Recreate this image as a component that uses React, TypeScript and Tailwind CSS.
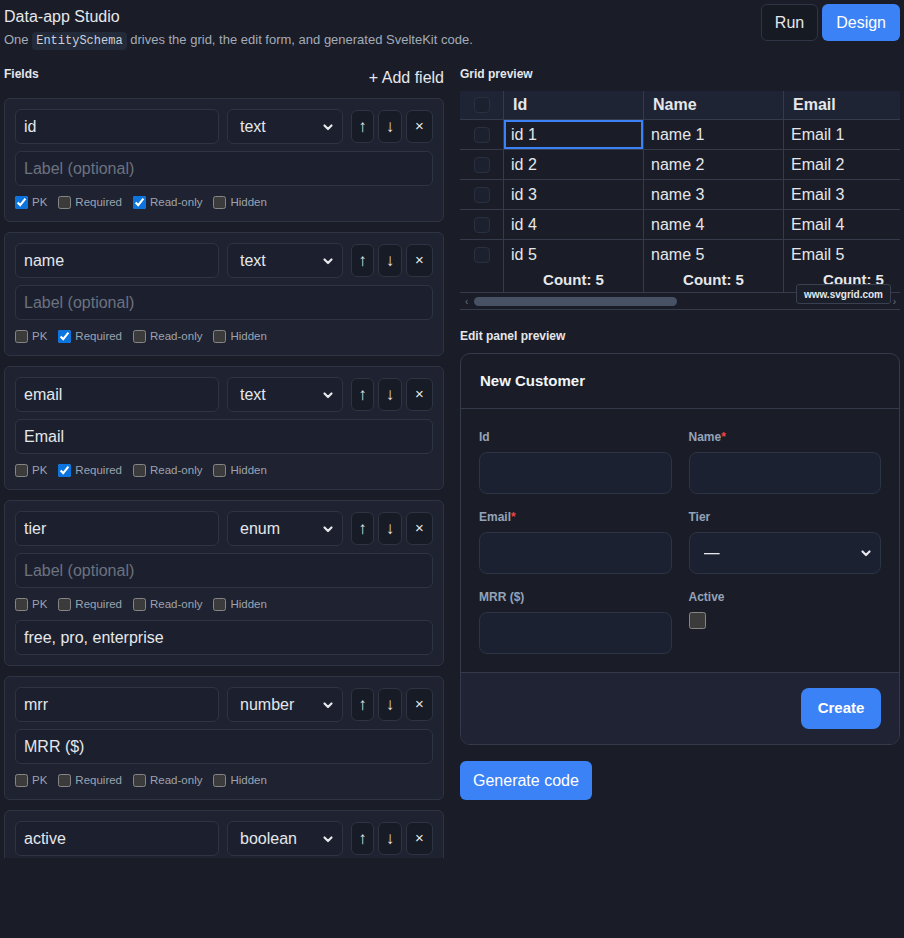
import React from 'react'

type Field = {
    name: string
    type: string
    label: string
    pk: boolean
    required: boolean
    readOnly: boolean
    hidden: boolean
    options?: string
}

const fields: Field[] = [
    { name: 'id', type: 'text', label: '', pk: true, required: false, readOnly: true, hidden: false },
    { name: 'name', type: 'text', label: '', pk: false, required: true, readOnly: false, hidden: false },
    { name: 'email', type: 'text', label: 'Email', pk: false, required: true, readOnly: false, hidden: false },
    { name: 'tier', type: 'enum', label: '', pk: false, required: false, readOnly: false, hidden: false, options: 'free, pro, enterprise' },
    { name: 'mrr', type: 'number', label: 'MRR ($)', pk: false, required: false, readOnly: false, hidden: false },
    { name: 'active', type: 'boolean', label: '', pk: false, required: false, readOnly: false, hidden: false },
]

const rows = [1, 2, 3, 4, 5]

function Chevron() {
    return (
        <svg width="12" height="12" viewBox="0 0 12 12" className='pointer-events-none absolute right-[9px] top-1/2 -translate-y-1/2'>
            <path d="M2.5 4.5 L6 8 L9.5 4.5" fill="none" stroke="#e5e7eb" strokeWidth="2.2" strokeLinecap="round" strokeLinejoin="round" />
        </svg>
    )
}

function Check({ label, checked }: { label: string; checked: boolean }) {
    return (
        <label className='flex items-center gap-1 text-[11.5px] leading-[18px] text-[#9ca3af]'>
            <input type="checkbox" defaultChecked={checked} className='m-0 w-[13px] h-[13px] accent-[#0b74de]' />
            {label}
        </label>
    )
}

function FieldCard({ field }: { field: Field }) {
    return (
        <div className='flex flex-none flex-col gap-[7px] rounded-md border border-[#2e3444] bg-[#1e2231] p-[10px]'>
            <div className='flex items-center'>
                <input defaultValue={field.name} className='h-[35px] min-w-0 flex-1 rounded-md border border-[#2e3443] bg-[#1c202e] px-2 text-base text-[#e5e7eb] outline-none' />
                <div className='relative ml-2 w-[116px]'>
                    <select defaultValue={field.type} className='h-[35px] w-full appearance-none rounded-md border border-[#2e3443] bg-[#1c202e] pl-3 text-base text-[#e5e7eb] outline-none'>
                        <option value="text">text</option>
                        <option value="number">number</option>
                        <option value="enum">enum</option>
                        <option value="boolean">boolean</option>
                    </select>
                    <Chevron />
                </div>
                <div className='ml-2 flex gap-1'>
                    <button className='h-[33px] w-[23px] rounded-md border border-[#2e3443] bg-[#171b25] text-[17px] text-[#e5e7eb]'>↑</button>
                    <button className='h-[33px] w-[24px] rounded-md border border-[#2e3443] bg-[#171b25] text-[17px] text-[#e5e7eb]'>↓</button>
                    <button className='h-[33px] w-[27px] rounded-md border border-[#2e3443] bg-[#171b25] text-[15px] text-[#e5e7eb]'>×</button>
                </div>
            </div>
            <input defaultValue={field.label} placeholder='Label (optional)' className='h-[35px] w-full rounded-md border border-[#2e3443] bg-[#1c202e] px-2 text-base text-[#e5e7eb] outline-none placeholder:text-[#6b7280]' />
            <div className='flex h-[18px] items-center gap-[11px]'>
                <Check label='PK' checked={field.pk} />
                <Check label='Required' checked={field.required} />
                <Check label='Read-only' checked={field.readOnly} />
                <Check label='Hidden' checked={field.hidden} />
            </div>
            {field.options && (
                <input defaultValue={field.options} className='h-[35px] w-full rounded-md border border-[#2e3443] bg-[#1c202e] px-2 text-base text-[#e5e7eb] outline-none' />
            )}
        </div>
    )
}

function GridBox() {
    return <div className='h-4 w-4 rounded-[4px] border border-[#2a3040] bg-[#1c2130]' />
}

function GridPreview() {
    return (
        <div className='relative overflow-hidden border-b border-[#353b4b]'>
            <div className='w-[604px]'>
                <div className='flex h-[29px] border-b border-[#353b4b] bg-[#1f2434] text-base font-bold text-[#e5e7eb]'>
                    <div className='flex w-[44px] items-center justify-center border-r border-[#353b4b]'><GridBox /></div>
                    <div className='flex w-[140px] items-center border-r border-[#353b4b] pl-[9px]'>Id</div>
                    <div className='flex w-[140px] items-center border-r border-[#353b4b] pl-[9px]'>Name</div>
                    <div className='flex w-[140px] items-center border-r border-[#353b4b] pl-[9px]'>Email</div>
                </div>
                {rows.map((n) => (
                    <div key={n} className={`flex text-base text-[#e5e7eb] ${n < 5 ? 'h-[30px] border-b border-[#353b4b]' : 'h-[29px]'}`}>
                        <div className='flex w-[44px] items-center justify-center border-r border-[#353b4b]'><GridBox /></div>
                        <div className={`flex w-[140px] items-center border-r border-[#353b4b] pl-[7px] ${n === 1 ? 'ring-2 ring-inset ring-[#3b82f6]' : ''}`}>id {n}</div>
                        <div className='flex w-[140px] items-center border-r border-[#353b4b] pl-[7px]'>name {n}</div>
                        <div className='flex w-[140px] items-center border-r border-[#353b4b] pl-[7px]'>Email {n}</div>
                    </div>
                ))}
                <div className='flex h-[24px] border-b border-[#353b4b] text-[15px] font-bold text-[#e5e7eb]'>
                    <div className='w-[44px] border-r border-[#353b4b]' />
                    <div className='flex w-[140px] items-center justify-center border-r border-[#353b4b]'>Count: 5</div>
                    <div className='flex w-[140px] items-center justify-center border-r border-[#353b4b]'>Count: 5</div>
                    <div className='flex w-[140px] items-center justify-center border-r border-[#353b4b]'>Count: 5</div>
                </div>
            </div>
            <div className='flex h-[16px] items-center gap-[6px] pl-[5px] pr-[4px] text-[10px] text-[#6b7280]'>
                <span>‹</span>
                <div className='h-[9px] w-[203px] rounded-full bg-[#475264]' />
                <span className='ml-auto'>›</span>
            </div>
            <div className='absolute right-[9px] top-[193px] flex h-[20px] items-center rounded-[3px] border border-[#3a4050] bg-[#1b1f29] px-[7px] text-[10px] font-bold text-[#e5e7eb]'>
                www.svgrid.com
            </div>
        </div>
    )
}

function FormLabel({ text, required }: { text: string; required?: boolean }) {
    return (
        <div className='mb-[7px] text-[12px] font-bold leading-4 text-[#94a3b8]'>
            {text}{required && <span className='text-[#ef4444]'>*</span>}
        </div>
    )
}

function EditPanel() {
    return (
        <div className='overflow-hidden rounded-[10px] border border-[#343a4a]'>
            <div className='flex h-[55px] items-center border-b border-[#343a4a] px-[19px] text-[15px] font-bold text-[#f1f5f9]'>
                New Customer
            </div>
            <div className='grid grid-cols-2 gap-x-[17px] gap-y-[15px] px-[18px] pb-[18px] pt-[20px]'>
                <div>
                    <FormLabel text='Id' />
                    <input className='h-[42px] w-full rounded-lg border border-[#2d3446] bg-[#1c2131] px-3 text-base text-[#e5e7eb] outline-none' />
                </div>
                <div>
                    <FormLabel text='Name' required />
                    <input className='h-[42px] w-full rounded-lg border border-[#2d3446] bg-[#1c2131] px-3 text-base text-[#e5e7eb] outline-none' />
                </div>
                <div>
                    <FormLabel text='Email' required />
                    <input className='h-[42px] w-full rounded-lg border border-[#2d3446] bg-[#1c2131] px-3 text-base text-[#e5e7eb] outline-none' />
                </div>
                <div>
                    <FormLabel text='Tier' />
                    <div className='relative'>
                        <select className='h-[42px] w-full appearance-none rounded-lg border border-[#2d3446] bg-[#1c2131] pl-[14px] text-base text-[#e5e7eb] outline-none'>
                            <option>—</option>
                            <option>free</option>
                            <option>pro</option>
                            <option>enterprise</option>
                        </select>
                        <Chevron />
                    </div>
                </div>
                <div>
                    <FormLabel text='MRR ($)' />
                    <input className='h-[42px] w-full rounded-lg border border-[#2d3446] bg-[#1c2131] px-3 text-base text-[#e5e7eb] outline-none' />
                </div>
                <div>
                    <FormLabel text='Active' />
                    <input type="checkbox" className='m-0 h-[17px] w-[17px]' />
                </div>
            </div>
            <div className='flex justify-end border-t border-[#343a4a] bg-[#1f2333] px-[18px] py-[15px]'>
                <button className='h-[41px] w-[80px] rounded-lg bg-[#3b82f6] text-[15px] font-bold text-white'>Create</button>
            </div>
        </div>
    )
}

export default function App() {
    return (
        <div className="min-h-screen bg-[#1a1d27] p-1 font-['Liberation_Sans',sans-serif] text-[#e5e7eb] [color-scheme:dark]">
            <header className='flex items-start justify-between'>
                <div>
                    <h1 className='mt-px text-base leading-6 text-[#e5e7eb]'>Data-app Studio</h1>
                    <p className='mt-px text-[13px] leading-5 text-[#a3abb9]'>
                        One <code className="rounded bg-[#232a3a] px-1 py-[2px] font-['Liberation_Mono',monospace] text-[12px] text-[#c9d1d9]">EntitySchema</code> drives the grid, the edit form, and generated SvelteKit code.
                    </p>
                </div>
                <div className='flex gap-1'>
                    <button className='h-[37px] rounded-md border border-[#2f3545] bg-[#161a23] px-[13px] text-base text-[#e5e7eb]'>Run</button>
                    <button className='h-[37px] rounded-md bg-[#3b82f6] px-[14px] text-base text-white'>Design</button>
                </div>
            </header>

            <main className='mt-[13px] grid grid-cols-[440px_440px] gap-4'>
                <section className='flex flex-col'>
                    <div className='flex items-start justify-between'>
                        <h2 className='text-[12px] font-bold leading-5'>Fields</h2>
                        <button className='py-0.5 text-base leading-6 text-[#e5e7eb]'>+ Add field</button>
                    </div>
                    <div className='mt-[6px] flex h-[760px] flex-col gap-[10px] overflow-hidden'>
                        {fields.map((f) => (
                            <FieldCard key={f.name} field={f} />
                        ))}
                    </div>
                </section>

                <section className='flex flex-col'>
                    <h2 className='text-[12px] font-bold leading-5'>Grid preview</h2>
                    <div className='mt-[7px]'>
                        <GridPreview />
                    </div>
                    <h2 className='mt-4 text-[12px] font-bold leading-5'>Edit panel preview</h2>
                    <div className='mt-[7px]'>
                        <EditPanel />
                    </div>
                    <div className='mt-4'>
                        <button className='h-[39px] rounded-md bg-[#3b82f6] px-[13px] text-base text-white'>Generate code</button>
                    </div>
                </section>
            </main>
        </div>
    )
}
